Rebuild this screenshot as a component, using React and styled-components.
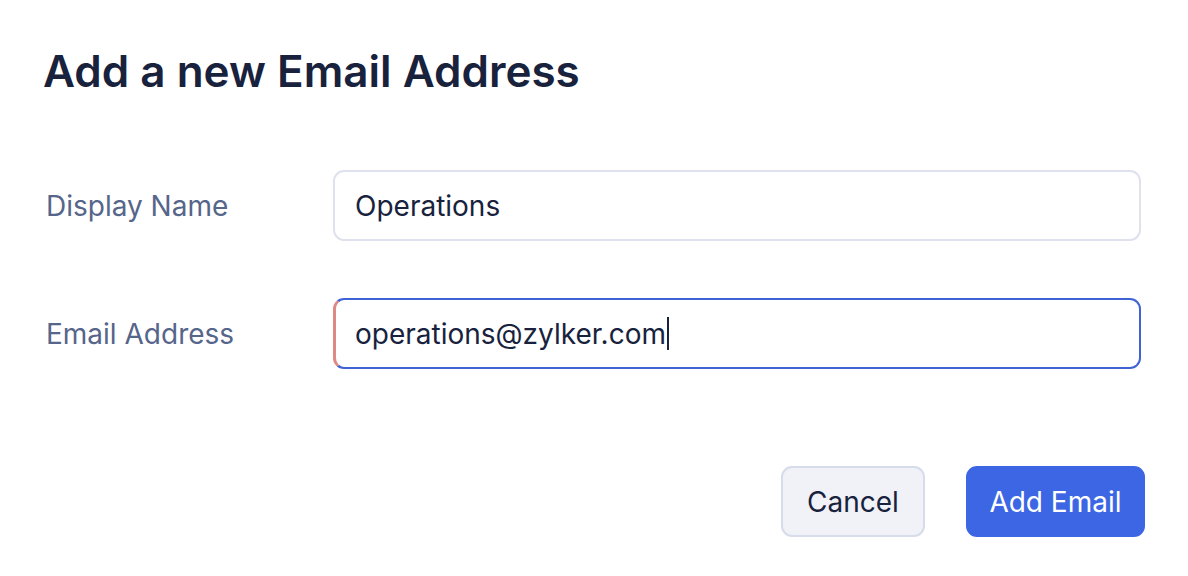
import React from 'react'
import styled, { createGlobalStyle } from 'styled-components'

const GlobalStyle = createGlobalStyle`
  html, body {
    margin: 0;
    padding: 0;
    background: #ffffff;
  }
  body {
    font-family: Inter, 'Noto Sans', 'Liberation Sans', sans-serif;
  }
`

const Dialog = styled.div`
  width: 1188px;
  height: 576px;
  box-sizing: border-box;
  padding: 44px 43px 0 43px;
  background: #ffffff;
`

const Title = styled.h1`
  margin: 0;
  font-size: 44px;
  line-height: 54px;
  font-weight: 600;
  color: #18223d;
`

const Form = styled.div`
  display: flex;
  flex-direction: column;
  gap: 57px;
  margin-top: 72px;
  padding-right: 4px;
`

const Row = styled.div`
  display: grid;
  grid-template-columns: 290px 1fr;
  align-items: center;
`

const Label = styled.label`
  padding-left: 3px;
  font-size: 28px;
  color: #56658a;
`

const Field = styled.div`
  height: 71px;
  box-sizing: border-box;
  display: flex;
  align-items: center;
  padding-left: ${p => (p.focused ? '19px' : '20px')};
  border: 2px solid ${p => (p.focused ? '#3f63d4' : '#dfe2ee')};
  border-left: ${p => (p.focused ? '3px solid #e08884' : '2px solid #dfe2ee')};
  border-radius: 11px;
  font-size: 28px;
  color: #18223d;
`

const Caret = styled.span`
  display: inline-block;
  width: 2px;
  height: 33px;
  margin-left: 1px;
  background: #18223d;
`

const Footer = styled.div`
  display: flex;
  justify-content: flex-end;
  gap: 41px;
  margin-top: 97px;
`

const Button = styled.button`
  height: 71px;
  box-sizing: border-box;
  padding: 0 ${p => (p.primary ? '21.5px' : '24px')};
  border-radius: 11px;
  font-family: inherit;
  font-size: 28px;
  border: 2px solid ${p => (p.primary ? '#3c66e4' : '#d7dcea')};
  background: ${p => (p.primary ? '#3c66e4' : '#f0f2f8')};
  color: ${p => (p.primary ? '#ffffff' : '#18223d')};
`

export default function App() {
  return (
    <Dialog>
      <GlobalStyle />
      <Title>Add a new Email Address</Title>
      <Form>
        <Row>
          <Label>Display Name</Label>
          <Field>Operations</Field>
        </Row>
        <Row>
          <Label>Email Address</Label>
          <Field focused>
            operations@zylker.com
            <Caret />
          </Field>
        </Row>
      </Form>
      <Footer>
        <Button>Cancel</Button>
        <Button primary>Add Email</Button>
      </Footer>
    </Dialog>
  )
}
